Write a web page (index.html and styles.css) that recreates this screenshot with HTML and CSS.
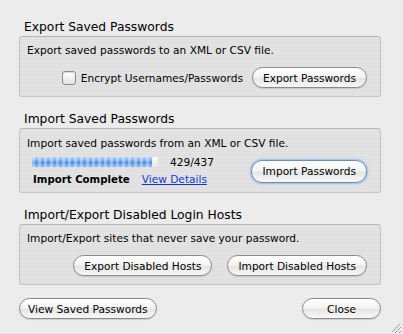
FILE: index.html
```html
<!DOCTYPE html>
<html lang="en">
<head>
  <meta charset="UTF-8">
  <title>Password Exporter</title>
  <link rel="stylesheet" href="styles.css">
</head>
<body>
  <div class="window">
    <h2 class="section-title">Export Saved Passwords</h2>
    <div class="group">
      <p class="note">Export saved passwords to an XML or CSV file.</p>
      <div class="row row-end">
        <label class="check"><input type="checkbox" class="checkbox">Encrypt Usernames/Passwords</label>
        <button class="btn">Export Passwords</button>
      </div>
    </div>

    <h2 class="section-title">Import Saved Passwords</h2>
    <div class="group group-import">
      <p class="note">Import saved passwords from an XML or CSV file.</p>
      <div class="row row-split">
        <div class="progress-col">
          <div class="progress-row">
            <div class="progress"><div class="progress-fill" style="width: 95%"></div></div>
            <span class="count">429/437</span>
          </div>
          <div class="status-row">
            <span class="status">Import Complete</span>
            <a href="#" class="link">View Details</a>
          </div>
        </div>
        <button class="btn btn-focus">Import Passwords</button>
      </div>
    </div>

    <h2 class="section-title">Import/Export Disabled Login Hosts</h2>
    <div class="group">
      <p class="note">Import/Export sites that never save your password.</p>
      <div class="row row-end row-hosts">
        <button class="btn">Export Disabled Hosts</button>
        <button class="btn">Import Disabled Hosts</button>
      </div>
    </div>

    <div class="footer">
      <button class="btn btn-view">View Saved Passwords</button>
      <button class="btn btn-close">Close</button>
    </div>

    <div class="grip"></div>
  </div>
</body>
</html>
```

FILE: styles.css
```css
body {
  margin: 0;
  font-family: "DejaVu Sans", sans-serif;
  font-size: 10.6px;
  color: #000;
  background: repeating-linear-gradient(#efefef 0 1px, #e8e8e8 1px 2px);
  overflow: hidden;
}
.window {
  position: relative;
  height: 334px;
  box-sizing: border-box;
  padding: 19px 22px 0 19px;
}
.section-title {
  margin: 0 0 0 5px;
  font-size: 12.3px;
  font-weight: normal;
  line-height: 17px;
}
.group + .section-title {
  margin-top: 14px;
}
.group {
  border: 1px solid #c4c4c4;
  border-top-color: #b8b8b8;
  border-radius: 3px;
  background-color: rgba(0, 0, 0, 0.045);
  padding: 6px 13px 8px 7px;
}
.group-import {
  padding-top: 7px;
  padding-bottom: 5px;
}
.note {
  margin: 0;
  line-height: 14px;
}
.row {
  display: flex;
  align-items: center;
  margin-top: 10px;
}
.row-end {
  justify-content: flex-end;
}
.row-split {
  justify-content: space-between;
  margin-top: 5px;
}
.row-hosts {
  gap: 15px;
}
.check {
  display: flex;
  align-items: center;
  margin-right: 9px;
}
.checkbox {
  appearance: none;
  width: 14px;
  height: 14px;
  margin: 0 5px 0 0;
  border: 1px solid #8c8c8c;
  border-radius: 3px;
  background: linear-gradient(#ffffff, #f1f1f1 50%, #e2e2e2);
  box-shadow: inset 0 1px 1px rgba(0, 0, 0, 0.15);
}
.btn {
  font-family: inherit;
  font-size: 10.6px;
  height: 21px;
  padding: 0 10px;
  white-space: nowrap;
  border: 1px solid #8a8a8a;
  border-radius: 11px;
  color: #000;
  background: linear-gradient(#ffffff 0%, #f4f4f4 45%, #e6e6e6 55%, #f7f7f7 100%);
  box-shadow: 0 1px 1px rgba(0, 0, 0, 0.12);
}
.btn-focus {
  height: 23px;
  padding: 0 10px;
  border-color: #6f8db3;
  box-shadow: 0 0 0 1px #a9c3e3, 0 0 2px 2px #c7d9ef;
}
.btn-view {
  padding: 0 8px;
}
.btn-close {
  min-width: 79px;
}
.progress-col {
  padding-left: 5px;
}
.progress-row {
  display: flex;
  align-items: center;
  height: 14px;
}
.progress {
  width: 126px;
  height: 10px;
  background: linear-gradient(#fafafa, #e9e9e9);
  border-radius: 1px;
  overflow: hidden;
}
.progress-fill {
  height: 100%;
  background:
    repeating-linear-gradient(90deg, rgba(255, 255, 255, 0.35) 0 3px, rgba(255, 255, 255, 0) 3px 6px),
    linear-gradient(#b6d3f4 0%, #7cb0ec 35%, #4f8fe0 55%, #8fc0f3 100%);
}
.count {
  margin-left: 12px;
  line-height: 14px;
}
.status-row {
  display: flex;
  align-items: baseline;
  margin-top: 3px;
  padding-left: 1px;
  line-height: 14px;
}
.status {
  font-weight: bold;
  font-size: 10.2px;
}
.link {
  margin-left: 12px;
  color: #1237d6;
  text-decoration: underline;
}
.footer {
  display: flex;
  justify-content: space-between;
  margin-top: 13px;
}
.grip {
  position: absolute;
  right: 2px;
  bottom: 1px;
  width: 9px;
  height: 9px;
  background: linear-gradient(135deg, transparent 40%, #a0a0a0 40% 48%, transparent 48% 62%, #a0a0a0 62% 70%, transparent 70% 84%, #a0a0a0 84% 92%, transparent 92%);
}
```
